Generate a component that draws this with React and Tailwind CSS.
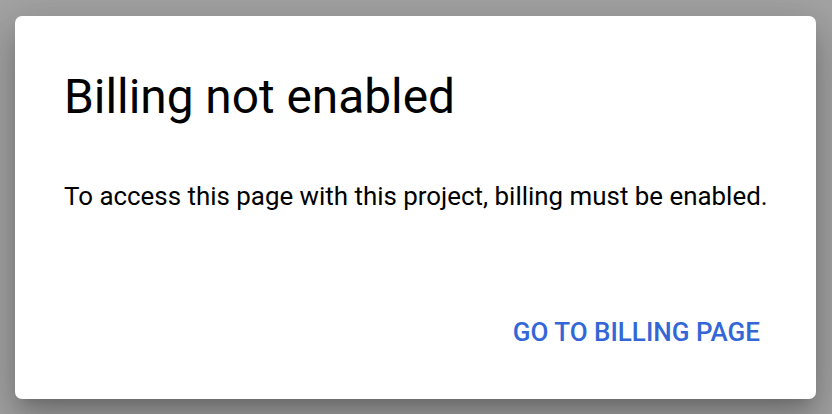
import React from 'react';

const BillingDialog = () => {
  return (
    <div className="w-[832px] h-[414px] bg-[#a3a3a3] pt-[16px] pl-[15px] overflow-hidden" style={{ fontFamily: 'Roboto, "Liberation Sans", sans-serif' }}>
      <div className="w-[801px] h-[383px] bg-white rounded-[7px] shadow-[0_11px_15px_-7px_rgba(0,0,0,0.2),0_24px_38px_3px_rgba(0,0,0,0.14),0_9px_46px_8px_rgba(0,0,0,0.12)] flex flex-col px-[49px]">
        <h2 className="text-[47.8px] leading-none text-black mt-[58px]">Billing not enabled</h2>
        <p className="text-[25.9px] leading-none text-black mt-[62px] whitespace-nowrap">
          To access this page with this project, billing must be enabled.
        </p>
        <div className="flex justify-end mt-auto mb-[54px] mr-[7px]">
          <button type="button" className="text-[26px] leading-none font-medium text-[#3367d6]">
            GO TO BILLING PAGE
          </button>
        </div>
      </div>
    </div>
  );
};

export default function App() {
  return <BillingDialog />;
}
